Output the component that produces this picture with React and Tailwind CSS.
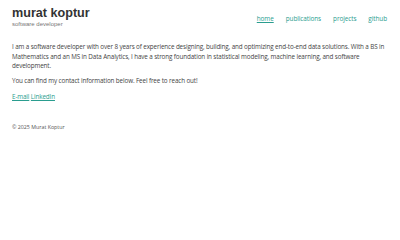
import React from 'react';

const body = { fontFamily: '"Open Sans", "Noto Sans", sans-serif' };
const head = { fontFamily: '"Liberation Sans", Arial, sans-serif' };

export default function App() {
  return (
    <div className="min-h-[225px] w-[400px] bg-white text-[#444]" style={body}>
      <div className="px-3 pt-[6px]">
        <header className="flex items-start justify-between">
          <div>
            <h1 className="text-[12.6px] font-bold leading-[15px] text-[#333]" style={head}>murat koptur</h1>
            <p className="text-[6px] leading-[7px] text-[#777]" style={head}>software developer</p>
          </div>
          <nav className="mt-[8px] mr-[1px] flex gap-[12px] text-[6.4px] tracking-[-0.08px] text-[#2a9d8f]">
            <a className="underline">home</a>
            <a>publications</a>
            <a>projects</a>
            <a>github</a>
          </nav>
        </header>

        <main className="mt-[14px] text-[6.3px] leading-[9.5px] tracking-[-0.12px]">
          <p>
            I am a software developer with over 8 years of experience designing, building, and optimizing end-to-end data solutions. With a BS in Mathematics and an MS in Data Analytics, I have a strong foundation in statistical modeling, machine learning, and software development.
          </p>
          <p className="mt-[5px]">You can find my contact information below. Feel free to reach out!</p>
          <p className="mt-[7px] text-[#2a9d8f]">
            <a className="underline">E-mail</a> <a className="underline">LinkedIn</a>
          </p>
        </main>

        <footer className="mt-[22px] text-[5.3px] text-[#555]">© 2025 Murat Koptur</footer>
      </div>
    </div>
  );
}
